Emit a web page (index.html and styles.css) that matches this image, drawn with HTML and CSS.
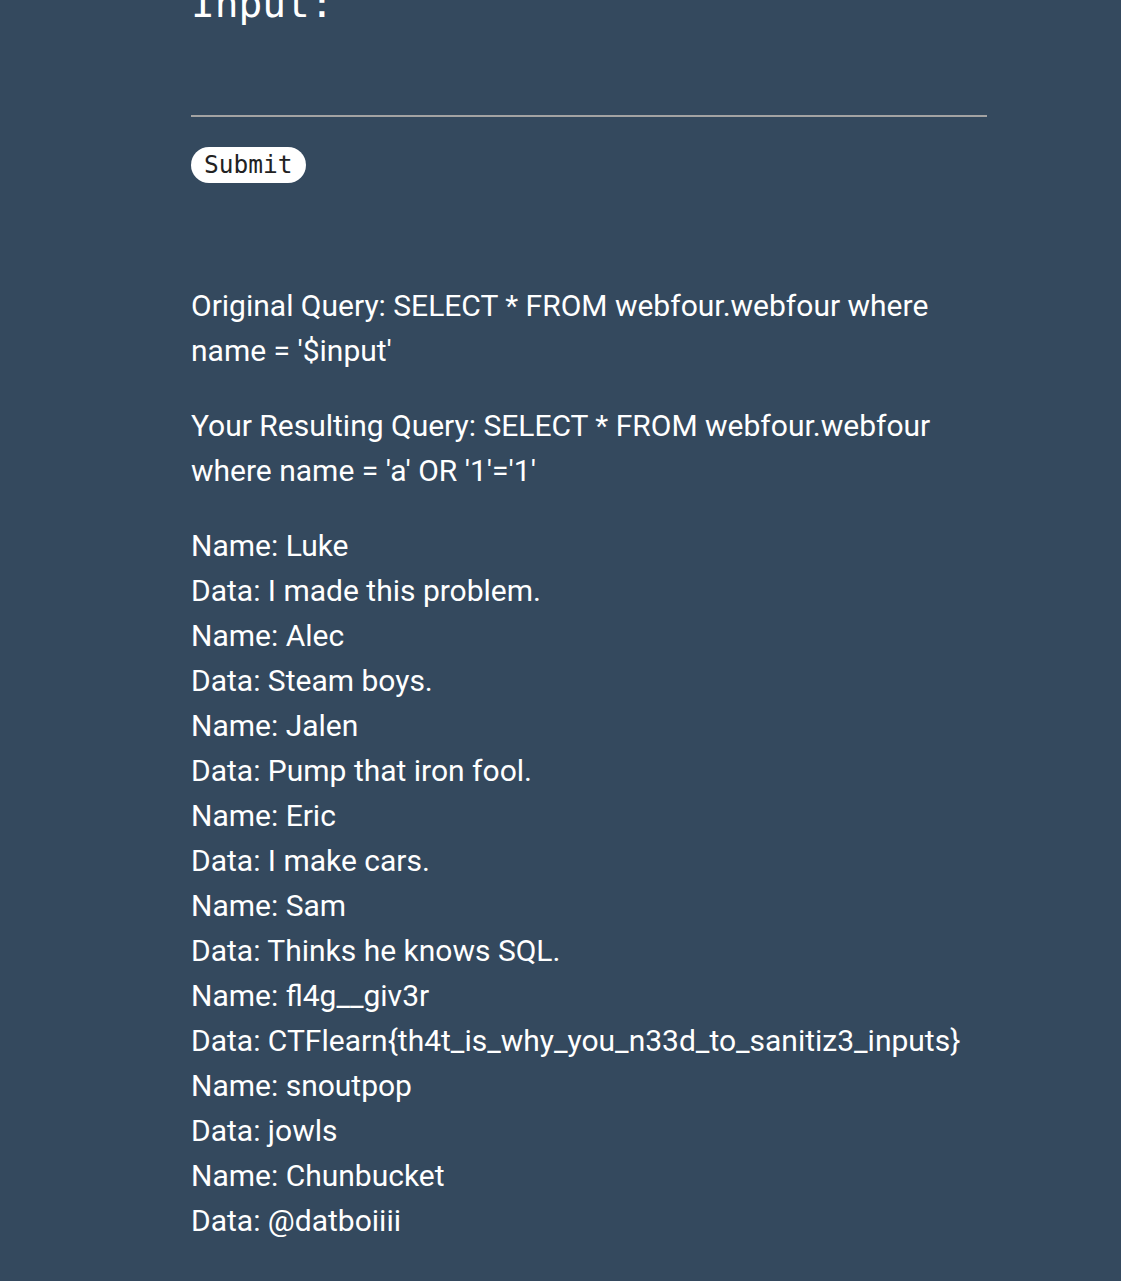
FILE: index.html
```html
<!DOCTYPE html>
<html>
<head>
<meta charset="utf-8">
<link rel="stylesheet" href="styles.css">
</head>
<body>
<main class="page">
  <form class="query-form">
    <label class="input-label" for="name">Input:</label>
    <input class="text-input" id="name" type="text">
    <button class="submit-btn" type="button">Submit</button>
  </form>
  <section class="results">
    <p>Original Query: SELECT * FROM webfour.webfour where name = '$input'</p>
    <p>Your Resulting Query: SELECT * FROM webfour.webfour where name = 'a' OR '1'='1'</p>
    <p>Name: Luke<br>Data: I made this problem.<br>Name: Alec<br>Data: Steam boys.<br>Name: Jalen<br>Data: Pump that iron fool.<br>Name: Eric<br>Data: I make cars.<br>Name: Sam<br>Data: Thinks he knows SQL.<br>Name: fl4g__giv3r<br>Data: CTFlearn{th4t_is_why_you_n33d_to_sanitiz3_inputs}<br>Name: snoutpop<br>Data: jowls<br>Name: Chunbucket<br>Data: @datboiiii</p>
  </section>
</main>
</body>
</html>
```
FILE: styles.css
```css
html, body {
  margin: 0;
  padding: 0;
  background: #34495e;
}
body {
  font-family: Roboto, "Noto Sans", sans-serif;
  color: #ffffff;
  overflow: hidden;
}
.page {
  width: 796px;
  margin-left: 191px;
  margin-top: -27px;
}
.query-form {
  display: flex;
  flex-direction: column;
  align-items: flex-start;
}
.input-label {
  font-family: "DejaVu Sans Mono", "Liberation Mono", monospace;
  font-size: 39.5px;
  line-height: 60px;
  display: block;
}
.text-input {
  box-sizing: border-box;
  width: 796px;
  height: 84px;
  margin: 0;
  padding: 0;
  border: none;
  border-bottom: 2px solid #a3a3a3;
  background: transparent;
  outline: none;
}
.submit-btn {
  margin-top: 30px;
  height: 36px;
  padding: 0 13px;
  border: none;
  border-radius: 18px;
  background: #ffffff;
  color: #222222;
  font-family: "DejaVu Sans Mono", "Liberation Mono", monospace;
  font-size: 24.5px;
  line-height: 36px;
}
.results {
  margin-top: 100px;
  font-size: 30px;
  line-height: 45px;
}
.results p {
  margin: 0 0 30px 0;
}
```
